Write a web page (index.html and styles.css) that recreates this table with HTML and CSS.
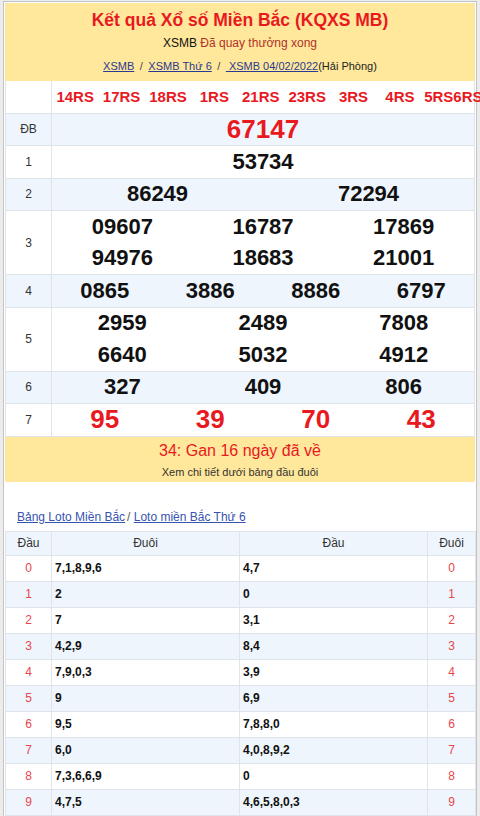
FILE: index.html
```html
<!DOCTYPE html>
<html lang="vi">
<head>
<meta charset="utf-8">
<title>KQXS MB</title>
<link rel="stylesheet" href="styles.css">
</head>
<body>
<div class="wrap">
  <div class="head">
    <h1 class="title">Kết quả Xổ số Miền Bắc (KQXS MB)</h1>
    <p class="sub">XSMB <span class="done">Đã quay thưởng xong</span></p>
    <p class="crumbs"><a href="#">XSMB</a><span class="sep">/</span><a href="#">XSMB Thứ 6</a><span class="sep">/</span><a href="#">&nbsp;XSMB 04/02/2022</a>(Hải Phòng)</p>
  </div>

  <div class="kq">
    <div class="row">
      <div class="label"></div>
      <div class="codes"><span>14RS</span><span>17RS</span><span>18RS</span><span>1RS</span><span>21RS</span><span>23RS</span><span>3RS</span><span>4RS</span><span class="last">5RS6RS</span></div>
    </div>
    <div class="row alt">
      <div class="label">ĐB</div>
      <div class="nums"><div class="line big red"><span>67147</span></div></div>
    </div>
    <div class="row">
      <div class="label">1</div>
      <div class="nums"><div class="line"><span>53734</span></div></div>
    </div>
    <div class="row alt">
      <div class="label">2</div>
      <div class="nums"><div class="line"><span>86249</span><span>72294</span></div></div>
    </div>
    <div class="row">
      <div class="label">3</div>
      <div class="nums">
        <div class="line"><span>09607</span><span>16787</span><span>17869</span></div>
        <div class="line"><span>94976</span><span>18683</span><span>21001</span></div>
      </div>
    </div>
    <div class="row alt">
      <div class="label">4</div>
      <div class="nums"><div class="line"><span>0865</span><span>3886</span><span>8886</span><span>6797</span></div></div>
    </div>
    <div class="row">
      <div class="label">5</div>
      <div class="nums">
        <div class="line"><span>2959</span><span>2489</span><span>7808</span></div>
        <div class="line"><span>6640</span><span>5032</span><span>4912</span></div>
      </div>
    </div>
    <div class="row alt">
      <div class="label">6</div>
      <div class="nums"><div class="line"><span>327</span><span>409</span><span>806</span></div></div>
    </div>
    <div class="row">
      <div class="label">7</div>
      <div class="nums"><div class="line big red"><span>95</span><span>39</span><span>70</span><span>43</span></div></div>
    </div>
  </div>

  <div class="gan">
    <p class="gan-title">34: Gan 16 ngày đã về</p>
    <p class="gan-desc">Xem chi tiết dưới bảng đầu đuôi</p>
  </div>

  <p class="loto-links"><a href="#">Bảng Loto Miền Bắc</a><span class="lsep">/</span> <a href="#">Loto miền Bắc Thứ 6</a></p>

  <table class="loto">
    <colgroup><col class="w1"><col class="w2"><col class="w3"><col class="w4"></colgroup>
    <thead>
      <tr><th>Đầu</th><th>Đuôi</th><th>Đầu</th><th>Đuôi</th></tr>
    </thead>
    <tbody>
      <tr><td class="d">0</td><td class="v">7,1,8,9,6</td><td class="v">4,7</td><td class="d">0</td></tr>
      <tr><td class="d">1</td><td class="v">2</td><td class="v">0</td><td class="d">1</td></tr>
      <tr><td class="d">2</td><td class="v">7</td><td class="v">3,1</td><td class="d">2</td></tr>
      <tr><td class="d">3</td><td class="v">4,2,9</td><td class="v">8,4</td><td class="d">3</td></tr>
      <tr><td class="d">4</td><td class="v">7,9,0,3</td><td class="v">3,9</td><td class="d">4</td></tr>
      <tr><td class="d">5</td><td class="v">9</td><td class="v">6,9</td><td class="d">5</td></tr>
      <tr><td class="d">6</td><td class="v">9,5</td><td class="v">7,8,8,0</td><td class="d">6</td></tr>
      <tr><td class="d">7</td><td class="v">6,0</td><td class="v">4,0,8,9,2</td><td class="d">7</td></tr>
      <tr><td class="d">8</td><td class="v">7,3,6,6,9</td><td class="v">0</td><td class="d">8</td></tr>
      <tr><td class="d">9</td><td class="v">4,7,5</td><td class="v">4,6,5,8,0,3</td><td class="d">9</td></tr>
    </tbody>
  </table>
</div>
</body>
</html>
```

FILE: styles.css
```css
* { box-sizing: border-box; }
html { overflow: hidden; }
html, body { margin: 0; padding: 0; }
body {
  background: #ececec;
  font-family: "Liberation Sans", Arial, sans-serif;
  color: #222;
}
p, h1 { margin: 0; }

.wrap {
  margin: 1px 3px 0 3px;
  border: 1px solid #c4c4c4;
  padding: 1px;
  background: #fff;
  height: 900px;
}

.head {
  background: #ffe89b;
  height: 78px;
  text-align: center;
  padding-top: 6px;
}
.title {
  font-size: 17.5px;
  line-height: 22px;
  font-weight: bold;
  color: #e8191f;
}
.sub {
  margin-top: 4px;
  font-size: 12px;
  line-height: 16px;
  color: #111;
}
.done { color: #b2302a; }
.crumbs {
  margin-top: 7px;
  font-size: 11px;
  line-height: 16px;
  color: #222;
}
.crumbs a { color: #2b3990; text-decoration: underline; }
.sep { padding: 0 5.5px; color: #444; }

.kq .row {
  display: grid;
  grid-template-columns: 46px 1fr;
  border-left: 1px solid #dfe4ea;
  border-right: 1px solid #dfe4ea;
  border-bottom: 1px solid #dfe4ea;
  background: #fff;
}
.kq .row.alt { background: #eef5fd; }
.label {
  border-right: 1px solid #dfe4ea;
  display: flex;
  align-items: center;
  justify-content: center;
  font-size: 12px;
  color: #333;
}
.codes {
  display: flex;
  height: 31.5px;
  align-items: center;
  white-space: nowrap;
  font-size: 15px;
  font-weight: bold;
  color: #e8191f;
}
.codes span { flex: 0 0 46.4px; text-align: center; }
.codes span.last { flex: 0 0 auto; text-align: left; padding-left: 1px; }
.line {
  display: flex;
  height: 31.5px;
  align-items: center;
  font-size: 22px;
  font-weight: bold;
  color: #111;
}
.line span { flex: 1 1 0; text-align: center; }
.line.big { font-size: 26px; }
.line.red { color: #e8191f; }

.gan {
  background: #ffe89b;
  text-align: center;
  padding: 4px 0 3px;
}
.gan-title {
  font-size: 16px;
  line-height: 20px;
  color: #e8191f;
}
.gan-desc {
  margin-top: 4px;
  font-size: 11px;
  line-height: 14px;
  color: #333;
}

.loto-links {
  margin-top: 27px;
  padding-left: 12px;
  font-size: 12px;
  line-height: 16px;
}
.loto-links a { color: #3653b0; text-decoration: underline; }
.lsep { color: #555; padding-left: 2px; }

.loto {
  margin-top: 6px;
  width: 100%;
  table-layout: fixed;
  border-collapse: collapse;
  font-size: 12px;
}
.loto .w1 { width: 46px; }
.loto .w2 { width: 188px; }
.loto .w3 { width: 188px; }
.loto .w4 { width: 48px; }
.loto th, .loto td {
  border: 1px solid #dfe4ea;
  padding: 0 3px;
}
.loto th {
  height: 24px;
  font-weight: normal;
  color: #333;
  background: #eef5fd;
  text-align: center;
}
.loto td { height: 26px; }
.loto tbody tr:nth-child(even) td { background: #eef5fd; }
.loto td.d { text-align: center; color: #e9464c; }
.loto td.v { font-weight: bold; color: #111; text-align: left; }
```
